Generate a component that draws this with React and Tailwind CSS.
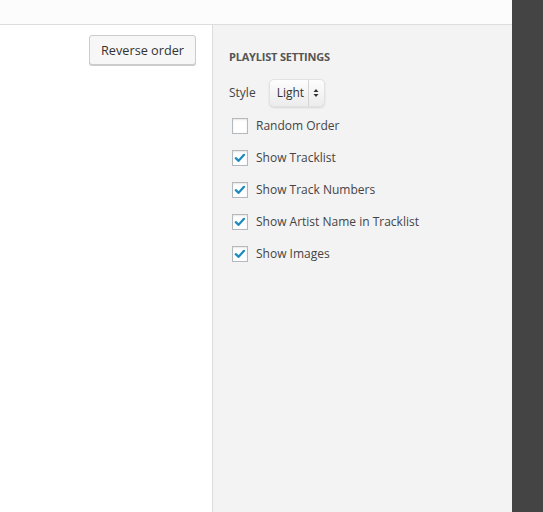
import React from "react";

const options = [
  { label: "Random Order", checked: false },
  { label: "Show Tracklist", checked: true },
  { label: "Show Track Numbers", checked: true },
  { label: "Show Artist Name in Tracklist", checked: true },
  { label: "Show Images", checked: true },
];

function Checkbox({ checked }) {
  return (
    <span className="w-4 h-4 shrink-0 bg-white border border-[#b4b9be] shadow-[inset_0_1px_2px_rgba(0,0,0,0.1)] flex items-center justify-center">
      {checked && (
        <svg viewBox="0 0 16 16" className="w-[14px] h-[14px]">
          <path
            d="M3.2 8.2 L6.4 11.2 L12.6 4.4"
            fill="none"
            stroke="#1e8cbe"
            strokeWidth="2.6"
            strokeLinecap="round"
            strokeLinejoin="round"
          />
        </svg>
      )}
    </span>
  );
}

export default function App() {
  return (
    <div
      className="w-[543px] h-[512px] flex overflow-hidden"
      style={{ fontFamily: '"Open Sans", "Noto Sans", sans-serif' }}
    >
      <div className="flex-1 flex flex-col">
        <div className="h-[25px] shrink-0 bg-[#fcfcfc] border-b border-[#dddddd]" />
        <div className="flex-1 flex">
          <div className="w-[213px] shrink-0 bg-white border-r border-[#dddddd] flex justify-end pr-[16px] pt-[10px]">
            <div>
              <button className="h-[30px] px-[11px] text-[12.7px] text-[#333] bg-[#f7f7f7] border border-[#cccccc] rounded-[3px] shadow-[0_1px_0_#cccccc] leading-[28px]">
                Reverse order
              </button>
            </div>
          </div>
          <div className="flex-1 bg-[#f3f3f3] pl-[16px] pt-[22px] text-[#444]">
            <h3 className="h-[20px] leading-[20px] text-[11px] font-bold tracking-[-0.2px] uppercase text-[#555]">
              Playlist Settings
            </h3>
            <div className="mt-[12px] flex items-center gap-[13px] h-[28px]">
              <span className="text-[12px] text-[#444]">Style</span>
              <div className="h-[28px] w-[56px] flex items-stretch rounded-[5px] border border-[#e2e2e2] bg-gradient-to-b from-[#fdfdfd] to-[#ececec] shadow-[0_1px_2px_rgba(0,0,0,0.12)]">
                <span className="flex-1 pl-[7px] text-[12px] leading-[26px] text-[#333]">
                  Light
                </span>
                <span className="w-[16px] border-l border-[#d4d4d4] flex flex-col items-center justify-center gap-[1px]">
                  <svg viewBox="0 0 6 10" className="w-[6px] h-[10px]">
                    <path d="M0.5 4 L3 1 L5.5 4 Z M0.5 6 L3 9 L5.5 6 Z" fill="#333" />
                  </svg>
                </span>
              </div>
            </div>
            <div className="mt-[3px]">
              {options.map((o) => (
                <label
                  key={o.label}
                  className="h-[32px] flex items-center gap-[8px] pl-[3px] text-[12px] text-[#444]"
                >
                  <Checkbox checked={o.checked} />
                  <span>{o.label}</span>
                </label>
              ))}
            </div>
          </div>
        </div>
      </div>
      <div className="w-[31px] shrink-0 bg-[#444444]" />
    </div>
  );
}
